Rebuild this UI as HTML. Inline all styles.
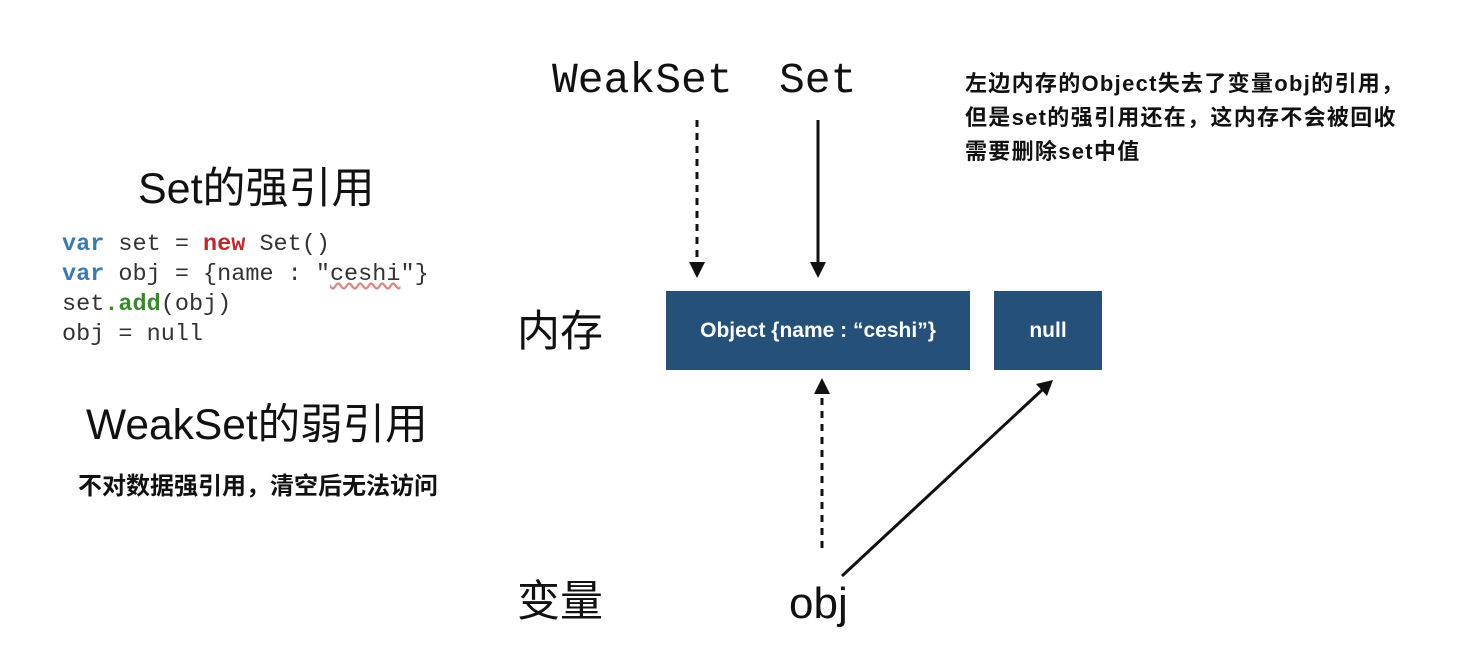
<!DOCTYPE html>
<html><head><meta charset="utf-8"><style>
body{margin:0;width:1480px;height:662px;background:#fff;position:relative;overflow:hidden;font-family:"Liberation Sans","Noto Sans CJK SC",sans-serif;color:#111}
.a{position:absolute;white-space:nowrap}
.mono{font-family:"Liberation Mono","DejaVu Sans Mono",monospace}
.code{font-size:23.5px;line-height:30px;color:#333}
.box{position:absolute;background:#25507a;color:#fff;font-weight:bold;font-size:21px;display:flex;align-items:center;justify-content:center}
</style></head><body>
<div class="a mono" style="left:552px;top:56px;font-size:43px;line-height:50px">WeakSet</div>
<div class="a mono" style="left:779px;top:56px;font-size:43px;line-height:50px">Set</div>
<div class="a" style="left:965px;top:67px;font-size:22px;line-height:34px;font-weight:bold;letter-spacing:1.3px">左边内存的Object失去了变量obj的引用，<br>但是set的强引用还在，这内存不会被回收<br>需要删除set中值</div>
<div class="a" style="left:138px;top:164px;font-size:43px;line-height:50px">Set的强引用</div>
<div class="a mono code" style="left:62px;top:230px"><b style="color:#3a7ab0">var</b> set = <b style="color:#c0282a">new</b> Set()<br><b style="color:#3a7ab0">var</b> obj = {name : "<span style="text-decoration:underline wavy #d88;">ceshi</span>"}<br>set<b style="color:#3a8a2a">.add</b>(obj)<br>obj = null</div>
<div class="a" style="left:86px;top:401px;font-size:42.5px;line-height:50px">WeakSet的弱引用</div>
<div class="a" style="left:78px;top:472px;font-size:24px;line-height:30px;font-weight:bold">不对数据强引用，清空后无法访问</div>
<div class="a" style="left:517px;top:307px;font-size:43px;line-height:50px">内存</div>
<div class="a" style="left:517px;top:577px;font-size:43px;line-height:50px">变量</div>
<div class="a" style="left:789px;top:579px;font-size:44px;line-height:50px">obj</div>
<div class="box" style="left:666px;top:291px;width:304px;height:79px">Object {name : “ceshi”}</div>
<div class="box" style="left:994px;top:291px;width:108px;height:79px">null</div>
<svg class="a" style="left:0;top:0" width="1480" height="662">
<g stroke="#111" stroke-width="3" fill="none">
<line x1="697" y1="120" x2="697" y2="264" stroke-dasharray="7,6"/>
<line x1="818" y1="120" x2="818" y2="264"/>
<line x1="822" y1="548" x2="822" y2="392" stroke-dasharray="7,6"/>
<line x1="842" y1="576" x2="1042" y2="390"/>
</g>
<g fill="#111">
<polygon points="689,262 705,262 697,278"/>
<polygon points="810,262 826,262 818,278"/>
<polygon points="814,394 830,394 822,378"/>
<polygon points="1036,384 1047,396 1053,380"/>
</g>
</svg>
</body></html>
